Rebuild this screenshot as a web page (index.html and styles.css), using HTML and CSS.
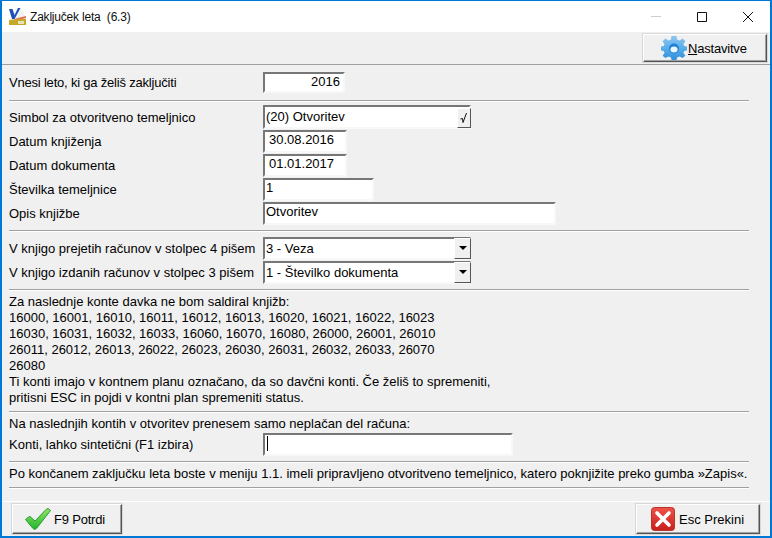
FILE: index.html
```html
<!DOCTYPE html>
<html lang="en">
<head>
    <meta charset="UTF-8">
    <title>Zaključek leta (6.3)</title>
    <link rel="stylesheet" href="styles.css">
</head>
<body>
<div class="window">
    <div class="titlebar">
        <svg class="app-icon" width="17" height="17" viewBox="0 0 17 17">
            <path d="M6 8L12 1L14 3L17 9L17 12L6 12Z" fill="#f2f2f2"/>
            <path d="M5 11L17 8L17 10L6 13Z" fill="#e0714f"/>
            <path d="M0 12L8 11L17 11L17 17L0 17Z" fill="#c8a82a"/>
            <path d="M9 13H15V16H9Z" fill="#e8e2b8"/>
            <path d="M0 1H3.5L5.5 7L9 0H11.5L5.5 11H3Z" fill="#1d50b8"/>
        </svg>
        <span class="title">Zaključek leta&nbsp; (6.3)</span>
        <div class="win-controls">
            <svg width="12" height="12" viewBox="0 0 12 12"><path d="M1 5.5H11" stroke="#ccc"/></svg>
            <svg width="12" height="12" viewBox="0 0 12 12"><path d="M1.5 1.5H10.5V10.5H1.5Z" fill="none" stroke="#111"/></svg>
            <svg width="12" height="12" viewBox="0 0 12 12"><path d="M1 1L11 11M11 1L1 11" stroke="#111"/></svg>
        </div>
    </div>

    <div class="toolbar">
        <button class="btn btn-settings">
            <svg width="26" height="24" viewBox="0 0 26 24">
                <defs>
                    <linearGradient id="gearFill" x1="0" y1="0" x2="0" y2="1">
                        <stop offset="0" stop-color="#8cc6f0"/>
                        <stop offset=".5" stop-color="#5aaee8"/>
                        <stop offset="1" stop-color="#2f8edc"/>
                    </linearGradient>
                </defs>
                <path d="M10.5 0H15.5L16 3.4L18.5 4.4L21.6 2.4L24.4 5.2L22.4 8.2L23.3 10L26 10.6V14.4L23.3 15L22.4 16.8L24.4 19.8L21.6 22L18.5 20.6L16 21.6L15.5 24H10.5L10 21.6L7.5 20.6L4.4 22L1.6 19.8L3.6 16.8L2.7 15L0 14.4V10.6L2.7 10L3.6 8.2L1.6 5.2L4.4 2.4L7.5 4.4L10 3.4Z" fill="url(#gearFill)"/>
                <circle cx="13" cy="12.5" r="5" fill="#1f7fd6"/>
                <ellipse cx="13" cy="13.5" rx="3.6" ry="3" fill="#eaf5fd"/>
            </svg>
            <span class="btn-label"><u>N</u>astavitve</span>
        </button>
    </div>

    <div class="form">
        <section class="group group-year">
            <div class="row">
                <label class="tight">Vnesi leto, ki ga želiš zaključiti</label>
                <div class="field w-year right">2016</div>
            </div>
        </section>
        <hr class="sep">

        <section class="group">
            <div class="row">
                <label>Simbol za otvoritveno temeljnico</label>
                <div class="field w-combo tall">(20) Otvoritev
                    <span class="drop drop-check">
                        <svg width="10" height="12" viewBox="0 0 10 12"><path d="M1.5 7L3.5 6.5L4 10.5L7.5 1" fill="none" stroke="#111"/></svg>
                    </span>
                </div>
            </div>
            <div class="row">
                <label>Datum knjiženja</label>
                <div class="field w-date pad">30.08.2016</div>
            </div>
            <div class="row">
                <label>Datum dokumenta</label>
                <div class="field w-date pad">01.01.2017</div>
            </div>
            <div class="row">
                <label>Številka temeljnice</label>
                <div class="field w-num">1</div>
            </div>
            <div class="row">
                <label>Opis knjižbe</label>
                <div class="field w-desc">Otvoritev</div>
            </div>
        </section>
        <hr class="sep">

        <section class="group group-select">
            <div class="row">
                <label>V knjigo prejetih računov v stolpec 4 pišem</label>
                <div class="field w-combo select">3 - Veza<span class="drop"><i class="arrow"></i></span></div>
            </div>
            <div class="row">
                <label>V knjigo izdanih računov v stolpec 3 pišem</label>
                <div class="field w-combo select">1 - Številko dokumenta<span class="drop"><i class="arrow"></i></span></div>
            </div>
        </section>
        <hr class="sep">

        <section class="group">
            <p class="note">Za naslednje konte davka ne bom saldiral knjižb:<br>
16000, 16001, 16010, 16011, 16012, 16013, 16020, 16021, 16022, 16023<br>
16030, 16031, 16032, 16033, 16060, 16070, 16080, 26000, 26001, 26010<br>
26011, 26012, 26013, 26022, 26023, 26030, 26031, 26032, 26033, 26070<br>
26080<br>
Ti konti imajo v kontnem planu označano, da so davčni konti. Če želiš to spremeniti,<br>
pritisni ESC in pojdi v kontni plan spremeniti status.</p>
        </section>
        <hr class="sep">

        <section class="group">
            <p class="note">Na naslednjih kontih v otvoritev prenesem samo neplačan del računa:</p>
            <div class="row">
                <label>Konti, lahko sintetični (F1 izbira)</label>
                <div class="field w-konti"><span class="caret"></span></div>
            </div>
        </section>
        <hr class="sep">

        <section class="group">
            <p class="note">Po končanem zaključku leta boste v meniju 1.1. imeli pripravljeno otvoritveno temeljnico, katero poknjižite preko gumba »Zapis«.</p>
        </section>
        <hr class="sep">
    </div>

    <div class="footer">
        <button class="btn btn-ok">
            <svg width="26" height="22" viewBox="0 0 26 22">
                <defs>
                    <linearGradient id="okFill" x1="0" y1="0" x2="0" y2="1">
                        <stop offset="0" stop-color="#8fe36a"/>
                        <stop offset="1" stop-color="#22b52c"/>
                    </linearGradient>
                </defs>
                <path d="M.5 11.5L3.5 9L5 8.5L10 13L21 1.5L23 .5L25.5 2.5L11.5 20.5L9.5 21.5L8 20.5Z" fill="url(#okFill)" stroke="#2c9c2c"/>
            </svg>
            <span class="btn-label">F9 Potrdi</span>
        </button>
        <button class="btn btn-cancel">
            <svg width="24" height="24" viewBox="0 0 24 24">
                <defs>
                    <linearGradient id="noFill" x1="0" y1="0" x2="0" y2="1">
                        <stop offset="0" stop-color="#f0524a"/>
                        <stop offset="1" stop-color="#c8201c"/>
                    </linearGradient>
                </defs>
                <rect x=".5" y=".5" width="23" height="23" rx="3" fill="url(#noFill)" stroke="#b8332c"/>
                <path d="M6 6L18 18M18 6L6 18" stroke="#fff" stroke-width="3.6" stroke-linecap="round"/>
            </svg>
            <span>Esc Prekini</span>
        </button>
    </div>
</div>
</body>
</html>
```

FILE: styles.css
```css
* {
    box-sizing: border-box;
}
html, body {
    margin: 0;
    height: 100%;
}
body {
    font-family: "Liberation Sans", Arial, sans-serif;
    font-size: 13px;
    color: #000;
}
.window {
    width: 772px;
    height: 538px;
    border: 1px solid #0078d7;
    border-width: 1px 2px 2px 2px;
    background-color: #f0f0f0;
    display: flex;
    flex-direction: column;
}

/* Title bar */
.titlebar {
    height: 31px;
    background-color: #fff;
    display: flex;
    align-items: center;
    padding-left: 7px;
}
.app-icon {
    margin-right: 4px;
}
.title {
    color: #111;
    font-size: 12px;
    letter-spacing: -0.2px;
}
.win-controls {
    margin-left: auto;
    display: flex;
    gap: 34px;
    padding-right: 16px;
}

.toolbar {
    height: 33px;
    border-bottom: 1px solid #a0a0a0;
    display: flex;
    justify-content: flex-end;
    padding: 2px 3px 0 0;
}

/* Buttons */
.btn {
    font: inherit;
    background-color: #f0f0f0;
    border: 1px solid;
    border-color: #fff #555 #555 #fff;
    box-shadow: inset -1px -1px 0 #a0a0a0, 0 0 0 1px #d8d8d8;
    display: flex;
    align-items: center;
    padding: 0;
}
.btn-label {
    letter-spacing: -0.2px;
}
.btn-settings {
    width: 124px;
    height: 28px;
    gap: 1px;
    padding-left: 17px;
}
.footer {
    margin-top: auto;
    height: 35px;
    border-top: 1px solid #fff;
    display: flex;
    justify-content: space-between;
    padding: 2px 10px 0;
}
.btn-ok {
    width: 110px;
    height: 30px;
    gap: 3px;
    padding-left: 12px;
}
.btn-cancel {
    width: 124px;
    height: 30px;
    gap: 4px;
    padding-left: 14px;
}

/* Form */
.form {
    padding: 0 21px 0 7px;
}
.group {
    padding: 3px 0 5px;
}
.group-year {
    padding: 5px 0 6px;
}
.group-year .field {
    height: 21px;
}
.group-select {
    padding-top: 4px;
}
.row {
    display: flex;
    align-items: center;
    height: 24px;
}
.row label {
    width: 254px;
    flex: none;
    white-space: nowrap;
}
.tight {
    letter-spacing: -0.2px;
}
.field {
    height: 23px;
    background-color: #fff;
    border: 2px solid;
    border-color: #777 #f8f8f8 #f8f8f8 #777;
    position: relative;
    padding: 0 0 0 1px;
    line-height: 16px;
    white-space: nowrap;
}
.tall {
    height: 24px;
    padding-top: 2px;
}
.select {
    padding-top: 2px;
}
.w-year {
    width: 82px;
}
.w-combo {
    width: 208px;
}
.w-date {
    width: 84px;
}
.w-num {
    width: 111px;
}
.w-desc {
    width: 293px;
}
.w-konti {
    width: 250px;
}
.right {
    text-align: right;
    padding-right: 3px;
}
.pad {
    padding-left: 4px;
}
.drop {
    position: absolute;
    top: -1px;
    right: -2px;
    width: 17px;
    height: 21px;
    background-color: #f0f0f0;
    border: 1px solid;
    border-color: #fff #555 #555 #fff;
    display: flex;
    align-items: center;
    justify-content: center;
}
.drop-check {
    top: 1px;
    width: 14px;
    height: 20px;
}
.arrow {
    border: 4px solid transparent;
    border-top-color: #000;
    border-bottom-width: 0;
}
.caret {
    display: block;
    width: 1px;
    height: 15px;
    background-color: #000;
    margin: 1px 0 0 1px;
}
.sep {
    margin: 0;
    height: 2px;
    border: 0;
    border-top: 1px solid #a0a0a0;
    border-bottom: 1px solid #fff;
}
.note {
    margin: 0;
    line-height: 16px;
    white-space: nowrap;
}
```
